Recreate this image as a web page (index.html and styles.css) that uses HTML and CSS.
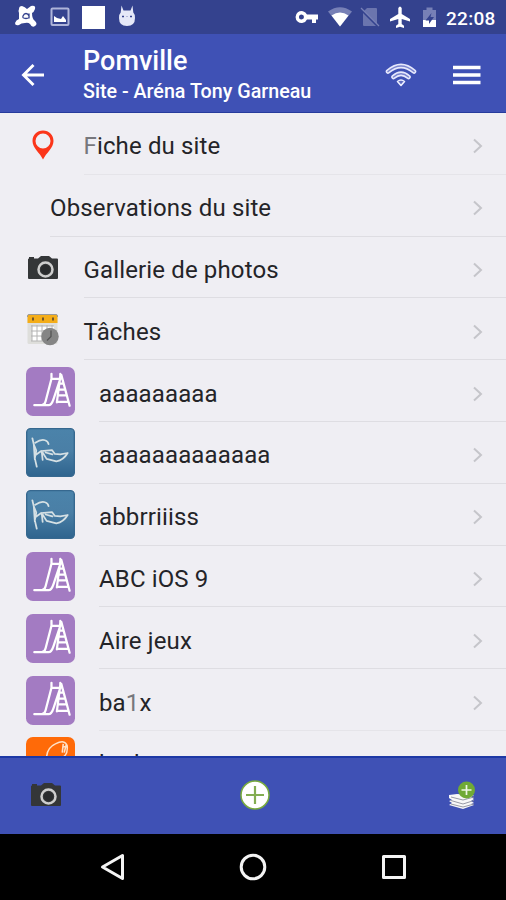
FILE: index.html
```html
<!DOCTYPE html>
<html lang="fr">
<head>
<meta charset="utf-8">
<title>Pomville</title>
<link rel="stylesheet" href="styles.css">
</head>
<body>
<svg class="defs" aria-hidden="true">
  <defs>
    <linearGradient id="steel" x1="0" y1="0" x2="0" y2="1"><stop offset="0" stop-color="#4b83aa"/><stop offset=".45" stop-color="#4a7fa6"/><stop offset="1" stop-color="#2f648e"/></linearGradient>
  </defs>
  <symbol id="chevron" viewBox="0 0 12 18"><path d="M2 2.500 9 9 2 15.500" fill="none" stroke="#c5c5ca" stroke-width="2"/></symbol>
  <symbol id="camera" viewBox="0 0 32 26">
    <path d="M1 4.500q0-1 1-1V2h5v1.500h4L14 1h8l3 2.500h5q1 0 1 1V23q0 1-1 1H2q-1 0-1-1z" fill="#343638"/>
    <circle cx="18.500" cy="14.500" r="7" fill="none" stroke="#cecece" stroke-width="2.500"/>
    <circle cx="18.500" cy="14.500" r="4.500" fill="#292b2d"/>
  </symbol>
  <symbol id="slide" viewBox="0 0 50 50">
    <rect width="50" height="50" rx="7" fill="#a37bc2"/>
    <path d="M26 7v5l-6 23q-1 4-4 4H8.500M16 39h7q3 0 5-6l7-21V7M26 12h9M35 9l-3.500 27M36 8l8.500 31.500M34 17h4.500M33 23h7M32.500 29h9M31.500 35.500h11.500" fill="none" stroke="#fff" stroke-width="2.300" stroke-linecap="round" stroke-linejoin="round"/>
  </symbol>
  <symbol id="springer" viewBox="0 0 50 50">
    <rect x=".7" y=".7" width="48.600" height="48.600" rx="4" fill="url(#steel)" stroke="#36688f" stroke-width="1.400"/>
    <path d="M6.500 10.500 8 17l2.500 6L9 31l2 8.500M8 17l1 15M9.500 15q6-4 10-2.500 3 1 3.500 4M10.500 27l5-3.500 11-1 3 4 5.500.500 7.500-1.500q-4 7-11.500 8.500l-10-2.500-5-8 1 9M20 25l7 2" fill="none" stroke="#d5e0e4" stroke-width="1.800" stroke-linecap="round" stroke-linejoin="round"/>
  </symbol>
</svg>

<div class="phone">
  <div class="status">
    <svg class="s-app" width="24" height="24" viewBox="0 0 24 24"><path d="M5 4q0-3 3-3 3 1 5 3l4-3q5-1 4 3-1 3-3 4 0 6 3 8 3 3 0 5-3 2-5-2-2-2-5-1-4 0-6 2-4 1-4-2 1-3 4-4V8q-1-2 0-4z" fill="#fff"/><path d="M15 8.500v5M15 11q-1-2.500-3-2.500T9 11t3 2.500 3-2.500" fill="none" stroke="#34428e" stroke-width="1.300"/></svg>
    <svg class="s-pic" width="20" height="20" viewBox="0 0 20 20"><rect x="1.500" y="1.500" width="17" height="16.500" rx="1" fill="none" stroke="#aeb4d9" stroke-width="2"/><path d="M4 15V9l3 2 4 1 2-3 3 4v2z" fill="#fff"/></svg>
    <svg class="s-square" width="23" height="23" viewBox="0 0 23 23"><path d="M0 0h23v23H0z" fill="#fff"/></svg>
    <svg class="s-cat" width="18" height="22" viewBox="0 0 18 22"><path d="M3.500.500 5.500 5.500h7l2-5 .8 7Q17 9 17 13q0 8-8 8t-8-8q0-4 1.700-5.500z" fill="#e5e8f8"/><path d="M4 11.500h2M12 11.500h2" stroke="#34428e" stroke-width="1.400"/><path d="M8 11.500h2" stroke="#b3b9dd"/></svg>
    <span class="spacer"></span>
    <svg class="s-key" width="23" height="14" viewBox="0 0 23 14"><path d="M12 4.500h11v5h-2V13h-4V9.500h-5A6 6 0 1 1 12 4.500zM6.500 4.500a2.500 2.500 0 1 0 0 5 2.500 2.500 0 0 0 0-5z" fill="#fff" fill-rule="evenodd"/></svg>
    <svg class="s-wifi" width="24" height="20" viewBox="0 0 24 20"><path d="M0 4.500Q12-4 24 4.500L12 19.500z" fill="#7780b6"/><path d="M3.500 8.500q8.500-6 17 0L12 19.500z" fill="#fff"/></svg>
    <svg class="s-sim" width="20" height="20" viewBox="0 0 20 20"><path d="M7 1h9q1 0 1 1v15L4 4zM3 6l13 13H4q-1 0-1-1z" fill="#6b75ae"/><path d="m1 1 18 18" stroke="#7780b6" stroke-width="1.300"/></svg>
    <svg class="s-plane" width="22" height="22" viewBox="0 0 22 22"><path d="M9.300 2q1.700-3 3.400 0v6l8.300 5v2.500l-8.300-2.500v5l2.300 1.800V22l-4-1.200L7 22v-2.200L9.300 18v-5L1 15.500V13l8.300-5z" fill="#fff"/></svg>
    <svg class="s-battery" width="15" height="21" viewBox="0 0 15 21"><path d="M1 3h3.500V.500h6V3H14v10H1z" fill="#7780b6"/><path d="M1 13h13v7H1z" fill="#fff"/><path d="m9.500 6-6 7.500H7V17l5-7H8.500z" fill="#34428e"/></svg>
    <span class="clock">22:08</span>
  </div>

  <header class="appbar">
    <svg class="back" width="24" height="24" viewBox="0 0 24 24"><path d="M23 12H2M12.500 2 2.500 12l10 10" fill="none" stroke="#fff" stroke-width="2.900"/></svg>
    <div class="titles">
      <div class="title">Pomville</div>
      <div class="subtitle">Site - Aréna Tony Garneau</div>
    </div>
    <svg class="signal" width="32" height="25" viewBox="0 0 32 25"><g fill="none" stroke="#e6e8fc" stroke-width="4.600" stroke-linecap="round"><path d="M3 8.500q13-11 26 0M8.500 14q7.500-6.500 15 0"/></g><g fill="none" stroke="#7984ce" stroke-width="1.500" stroke-linecap="round"><path d="M3 8.500q13-11 26 0M8.500 14q7.500-6.500 15 0"/></g><path d="M12.500 18.500q3.500-3 7 0L16 22.500z" fill="#5e6bc0" stroke="#eef0ff" stroke-width="1.600" stroke-linejoin="round"/></svg>
    <svg class="menu" width="28" height="20" viewBox="0 0 28 20"><path d="M0 2.500h27.500M0 10h27.500M0 17.500h27.500" stroke="#fff" stroke-width="3.600"/></svg>
  </header>

  <main class="list">
    <div class="row small"><svg class="lead pin" width="22" height="30" viewBox="0 0 22 30"><path d="M11 .500C5 .500.500 5 .500 11c0 7 7.500 12 10.500 18.500C14 23 21.500 18 21.500 11 21.500 5 17 .500 11 .500zm0 3a7.500 7.500 0 0 1 0 15 7.500 7.500 0 0 1 0-15z" fill="#fb3519" fill-rule="evenodd"/></svg><div class="body faint"><span class="label"><span class="fade">F</span>iche du site</span><svg class="chev"><use href="#chevron"/></svg></div></div>
    <div class="row plain"><div class="body"><span class="label">Observations du site</span><svg class="chev"><use href="#chevron"/></svg></div></div>
    <div class="row small"><svg class="lead" width="32" height="26"><use href="#camera"/></svg><div class="body"><span class="label">Gallerie de photos</span><svg class="chev"><use href="#chevron"/></svg></div></div>
    <div class="row small"><svg class="lead" width="32" height="32" viewBox="0 0 32 32"><rect x=".5" y="1" width="30" height="29" rx="1.500" fill="#dededb"/><path d="M.500 9V2q0-1.500 1.500-1.500h27q1.500 0 1.500 1.500v7z" fill="#f4ad19"/><path d="M.500 3V2q0-1.500 1.500-1.500h27q1.500 0 1.500 1.500v1" fill="none" stroke="#999"/><path d="M5 5h2M15 5h2M25 5h2" stroke="#70552b" stroke-width="3"/><path d="M5 12h22v15H5z" fill="#fff"/><path d="M4 12h23M4 17h23M4 22h20M4 27h20M5 11v16M10 11v16M15 11v16M20 11v16M25 11v12" stroke="#b4b4b4"/><circle cx="23" cy="22.500" r="8.700" fill="#858585"/><path d="M24 16.500v6l-4 4" fill="none" stroke="#555" stroke-width="1.300"/></svg><div class="body"><span class="label">Tâches</span><svg class="chev"><use href="#chevron"/></svg></div></div>
    <div class="row"><svg class="lead tile"><use href="#slide"/></svg><div class="body"><span class="label">aaaaaaaaa</span><svg class="chev"><use href="#chevron"/></svg></div></div>
    <div class="row"><svg class="lead tile"><use href="#springer"/></svg><div class="body"><span class="label">aaaaaaaaaaaaa</span><svg class="chev"><use href="#chevron"/></svg></div></div>
    <div class="row"><svg class="lead tile"><use href="#springer"/></svg><div class="body"><span class="label">abbrriiiss</span><svg class="chev"><use href="#chevron"/></svg></div></div>
    <div class="row"><svg class="lead tile"><use href="#slide"/></svg><div class="body"><span class="label">ABC iOS 9</span><svg class="chev"><use href="#chevron"/></svg></div></div>
    <div class="row"><svg class="lead tile"><use href="#slide"/></svg><div class="body"><span class="label">Aire jeux</span><svg class="chev"><use href="#chevron"/></svg></div></div>
    <div class="row"><svg class="lead tile"><use href="#slide"/></svg><div class="body faint"><span class="label">ba<span class="fade">1</span>x</span><svg class="chev"><use href="#chevron"/></svg></div></div>
    <div class="row"><svg class="lead tile" viewBox="0 0 50 50"><rect width="50" height="50" rx="7" fill="#ff6a08"/><path d="M21 22q0-11 9-15 10-5 12 2 1 9-5 12M38 7l-1 9M41 8l-2 8M37 10h5" fill="none" stroke="#ffe2c8" stroke-width="1.600"/></svg><div class="body"><span class="label">bark</span><svg class="chev"><use href="#chevron"/></svg></div></div>
  </main>

  <footer class="toolbar">
    <svg width="32" height="26"><use href="#camera"/></svg>
    <svg class="add" width="30" height="30" viewBox="0 0 30 30"><circle cx="15" cy="15" r="14" fill="#fff" stroke="#78aa3e" stroke-width="1.500"/><path d="M15 6v18M6 15h18" stroke="#83ad52" stroke-width="2.200"/></svg>
    <svg class="layers" width="28" height="29" viewBox="0 0 28 29"><path d="m1 14 8-1 17 1-3 2 3 2-3 2 3 2-3 1 3 1-11 4-14-4 3-2-3-2 3-1-3-2z" fill="#f8f8f8"/><path d="m3 16 12 3 11-3M3 19.500 15 23l11-3.500M3 23l12 3 11-3" fill="none" stroke="#8c8f9c" stroke-width=".9"/><circle cx="18.500" cy="9" r="8.500" fill="#70aa35"/><path d="M18.500 4v10M13.500 9h10" stroke="#eef7e4" stroke-width="1.700"/></svg>
  </footer>

  <nav class="navbar">
    <svg width="25" height="28" viewBox="0 0 25 28"><path d="M22.500 2.500v23L2.500 14z" fill="none" stroke="#f4f4f4" stroke-width="3" stroke-linejoin="round"/></svg>
    <svg width="28" height="28" viewBox="0 0 28 28"><circle cx="14" cy="14" r="11.800" fill="none" stroke="#f4f4f4" stroke-width="3"/></svg>
    <svg width="26" height="26" viewBox="0 0 26 26"><rect x="2.500" y="2.500" width="21" height="21" fill="none" stroke="#f4f4f4" stroke-width="3" stroke-linejoin="round"/></svg>
  </nav>
</div>
</body>
</html>
```

FILE: styles.css
```css
* { box-sizing: border-box; }
body { margin: 0; font-family: Roboto, "Liberation Sans", sans-serif; }
svg { display: block; flex: none; }
.defs { position: absolute; width: 0; height: 0; }
.phone { width: 506px; height: 900px; display: flex; flex-direction: column; overflow: hidden; background: #efeef3; }

.status { height: 34px; flex: none; display: flex; align-items: center; padding: 0 10px 0 14px; background: #34428e; }
.s-pic { margin-left: 12px; }
.s-square { margin-left: 12px; }
.s-cat { margin: 0 0 2px 13px; }
.spacer { flex: 1; }
.s-wifi { margin-left: 10px; }
.s-sim { margin-left: 8px; }
.s-plane { margin-left: 9px; }
.s-battery { margin-left: 11px; }
.clock { width: 50px; margin-left: 9px; color: #fff; font-size: 19px; font-weight: 500; line-height: 34px; letter-spacing: .3px; padding-top: 3px; white-space: nowrap; }

.appbar { height: 79px; flex: none; display: flex; align-items: center; padding: 4px 25px 0 21px; background: #3f51b5; border-bottom: 1px solid #263b9c; }
.titles { flex: 1; margin-left: 38px; color: #fff; font-weight: 500; white-space: nowrap; }
.title { font-size: 27px; line-height: 32px; margin-top: 2px; }
.subtitle { font-size: 19.700px; line-height: 30px; }
.menu { margin-left: 36px; }

.list { flex: none; height: 643px; overflow: hidden; }
.row { height: 61.8px; display: flex; align-items: center; padding-left: 25.500px; }
.lead { margin-right: 24.500px; }
.small .lead { margin: 2px 26px 0 1px; }
.small .pin { margin-left: 6px; margin-right: 31px; }
.small .lead + .body { margin-left: -1px; }
.tile { width: 49px; height: 49px; }
.plain { padding-left: 50px; }
.body { flex: 1; height: 100%; display: flex; align-items: center; justify-content: space-between; padding: 4px 22px 0 0; border-bottom: 1px solid #dedde2; }
.faint { border-color: #e5e4e9; }
.label { color: #242428; font-size: 24px; line-height: 32px; letter-spacing: .14px; white-space: nowrap; padding-top: 2px; }
.fade { color: #77777c; }
.chev { width: 12px; height: 18px; margin-top: 2px; }

.toolbar { height: 78px; flex: none; display: flex; align-items: center; justify-content: space-between; padding: 0 30px 2px; background: #3f51b5; border-top: 2px solid #1d38a5; }
.navbar { height: 66px; flex: none; display: flex; align-items: center; justify-content: space-between; padding: 0 99px 0 100px; background: #000; }
```
